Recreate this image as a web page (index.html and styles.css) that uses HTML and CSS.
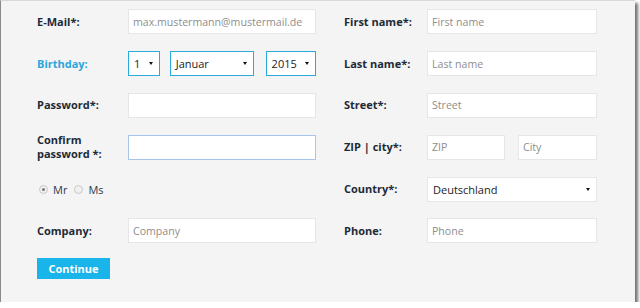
FILE: index.html
```
<!DOCTYPE html>
<html lang="de">
<head>
    <meta charset="UTF-8">
    <meta name="viewport" content="width=device-width, initial-scale=1.0">
    <title>Registrierung</title>
    <link rel="stylesheet" href="styles.css">
</head>
<body>
    <div class="panel">
        <form class="form">
            <div class="col col-left">
                <label class="label">E-Mail*:</label>
                <input class="field" type="text" placeholder="max.mustermann@mustermail.de">

                <label class="label label-active">Birthday:</label>
                <div class="dates">
                    <div class="select select-day">1</div>
                    <div class="select select-month">Januar</div>
                    <div class="select select-year">2015</div>
                </div>

                <label class="label">Password*:</label>
                <input class="field" type="password">

                <label class="label label-wrap">Confirm password *:</label>
                <input class="field field-focus" type="password">

                <div class="gender">
                    <span class="radio checked"></span><span class="radio-text">Mr</span>
                    <span class="radio"></span><span class="radio-text">Ms</span>
                </div>

                <label class="label">Company:</label>
                <input class="field" type="text" placeholder="Company">
            </div>

            <div class="col col-right">
                <label class="label">First name*:</label>
                <input class="field" type="text" placeholder="First name">

                <label class="label">Last name*:</label>
                <input class="field" type="text" placeholder="Last name">

                <label class="label">Street*:</label>
                <input class="field" type="text" placeholder="Street">

                <label class="label">ZIP | city*:</label>
                <div class="zip-city">
                    <input class="field" type="text" placeholder="ZIP">
                    <input class="field" type="text" placeholder="City">
                </div>

                <label class="label">Country*:</label>
                <div class="select select-country">Deutschland</div>

                <label class="label">Phone:</label>
                <input class="field" type="text" placeholder="Phone">
            </div>
        </form>

        <button type="button" class="btn">Continue</button>
    </div>
</body>
</html>
```

FILE: styles.css
```
body {
    margin: 0;
    padding: 0;
    background-color: #ffffff;
    font-family: "Open Sans", Arial, sans-serif;
}
.panel {
    width: 598px;
    height: 301px;
    padding: 0 0 0 36px;
    background-color: #f4f4f4;
    border-left: 1px solid #8a8a8a;
    border-top: 1px solid #d8d8d8;
    box-shadow: 3px 3px 3px rgba(0, 0, 0, 0.55);
    position: relative;
}
.form {
    display: flex;
    gap: 28px;
}
.col {
    display: grid;
    grid-auto-rows: 41.8px;
    align-items: center;
}
.col-left {
    grid-template-columns: 91px 188px;
}
.col-right {
    grid-template-columns: 83px 170px;
}
.label {
    font-size: 11px;
    font-weight: bold;
    color: #1d2a38;
    line-height: 14px;
}
.label-active {
    color: #2ba6dc;
}
.label-wrap {
    width: 80px;
}
.field {
    box-sizing: border-box;
    width: 100%;
    height: 25px;
    padding: 0 4px;
    border: 1px solid #e6e6e6;
    background: #ffffff;
    font-family: "Open Sans", Arial, sans-serif;
    font-size: 10.6px;
    color: #333333;
    outline: none;
}
.field::placeholder {
    color: #8e8e8e;
}
.field-focus {
    border-color: #a9c4ea;
}
.dates {
    display: flex;
    gap: 10px;
}
.select {
    box-sizing: border-box;
    height: 25px;
    padding: 0 5px;
    border: 1px solid #2aa9dd;
    background: #ffffff;
    font-size: 11px;
    line-height: 23px;
    color: #222222;
    position: relative;
}
.select::after {
    content: "";
    position: absolute;
    right: 6px;
    top: 10px;
    border-left: 2px solid transparent;
    border-right: 2px solid transparent;
    border-top: 3px solid #111111;
}
.select-day {
    width: 32px;
}
.select-month {
    width: 85px;
}
.select-year {
    width: 51px;
    margin-left: 2px;
}
.select-country {
    border-color: #e6e6e6;
}
.gender {
    grid-column: 1 / 3;
    display: flex;
    align-items: center;
    padding-left: 2px;
    font-size: 11px;
    color: #2b3b4e;
}
.radio {
    box-sizing: border-box;
    width: 9px;
    height: 9px;
    border-radius: 50%;
    border: 1px solid #c8c8c8;
    background: #f0f0f0;
    position: relative;
}
.radio.checked::after {
    content: "";
    position: absolute;
    left: 2px;
    top: 2px;
    width: 3px;
    height: 3px;
    border-radius: 50%;
    background: #777777;
}
.radio-text {
    margin: 0 7px 0 5px;
}
.zip-city {
    display: flex;
    gap: 13px;
}
.zip-city .field {
    width: 78px;
    flex: none;
}
.zip-city .field + .field {
    width: 79px;
}
.btn {
    margin-top: 6px;
    width: 73px;
    height: 21px;
    padding: 0;
    border: none;
    background-color: #19b4ea;
    color: #ffffff;
    font-family: "Open Sans", Arial, sans-serif;
    font-size: 11px;
    font-weight: bold;
    cursor: pointer;
}
```
